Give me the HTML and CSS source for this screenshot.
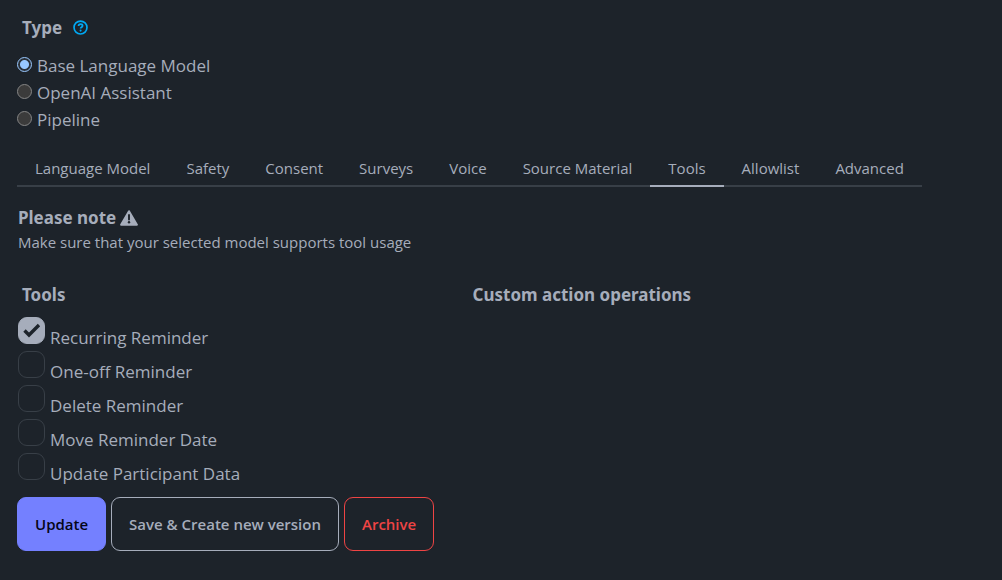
FILE: index.html
```html
<!DOCTYPE html>
<html lang="en">
<head>
<meta charset="utf-8">
<title>Experiment settings</title>
<link rel="stylesheet" href="styles.css">
</head>
<body>
<form class="page">
  <fieldset class="group">
    <legend class="heading type-heading">Type
      <svg class="help" viewBox="0 0 16 16" role="img" aria-label="Help"><circle cx="8" cy="8" r="6.9" fill="none" stroke="currentColor" stroke-width="1.8"/><path d="M5.9 6.4C6 5 6.900 4.500 8.100 4.500c1.200 0 2.100.7 2.100 1.700 0 1.500-2.100 1.500-2.100 2.900" fill="none" stroke="currentColor" stroke-width="1.900"/><circle cx="8.100" cy="11.300" r="1.100" fill="currentColor"/></svg>
    </legend>
    <label class="radio-row"><input class="radio" type="radio" name="type" checked>Base Language Model</label>
    <label class="radio-row"><input class="radio" type="radio" name="type">OpenAI Assistant</label>
    <label class="radio-row"><input class="radio" type="radio" name="type">Pipeline</label>
  </fieldset>

  <div class="tabs" role="tablist">
    <button class="tab" type="button" role="tab">Language Model</button>
    <button class="tab" type="button" role="tab">Safety</button>
    <button class="tab" type="button" role="tab">Consent</button>
    <button class="tab" type="button" role="tab">Surveys</button>
    <button class="tab" type="button" role="tab">Voice</button>
    <button class="tab" type="button" role="tab">Source Material</button>
    <button class="tab tab-active" type="button" role="tab" aria-selected="true">Tools</button>
    <button class="tab" type="button" role="tab">Allowlist</button>
    <button class="tab" type="button" role="tab">Advanced</button>
  </div>

  <section class="note">
    <h2 class="note-title">Please note
      <svg class="warning" viewBox="0 0 18 16" aria-hidden="true"><path d="M9 1.200 16.900 14.700H1.100Z" fill="currentColor" stroke="currentColor" stroke-width="2" stroke-linejoin="round"/><path class="mark" d="M9 5v4.600" stroke-width="1.900" stroke-linecap="round"/><circle class="dot" cx="9" cy="12.300" r="1.200"/></svg>
    </h2>
    <p class="note-text">Make sure that your selected model supports tool usage</p>
  </section>

  <div class="columns">
    <fieldset class="group">
      <legend class="heading">Tools</legend>
      <label class="check-row"><input class="check" type="checkbox" checked><span class="check-label">Recurring Reminder</span></label>
      <label class="check-row"><input class="check" type="checkbox"><span class="check-label">One-off Reminder</span></label>
      <label class="check-row"><input class="check" type="checkbox"><span class="check-label">Delete Reminder</span></label>
      <label class="check-row"><input class="check" type="checkbox"><span class="check-label">Move Reminder Date</span></label>
      <label class="check-row"><input class="check" type="checkbox"><span class="check-label">Update Participant Data</span></label>
    </fieldset>
    <section>
      <h2 class="heading">Custom action operations</h2>
    </section>
  </div>

  <div class="actions">
    <button class="btn btn-primary" type="submit">Update</button>
    <button class="btn" type="button">Save &amp; Create new version</button>
    <button class="btn btn-danger" type="button">Archive</button>
  </div>
</form>
</body>
</html>
```
FILE: styles.css
```css
:root {
  --bg: #1d232a;
  --text: #a6adbb;
  --line: #383f47;
}

* {
  box-sizing: border-box;
}

body {
  margin: 0;
  background: var(--bg);
  color: var(--text);
  font: 17px/27px "Segoe UI", "Open Sans", "Noto Sans", sans-serif;
}

.page {
  padding: 9px 84px 0 17px;
}

.group {
  border: 0;
  margin: 0;
  padding: 0;
  min-width: 0;
}

.heading,
.note-title {
  font-family: "Segoe UI", "Noto Sans", sans-serif;
  font-size: 17px;
  font-weight: 700;
}

.heading {
  margin: 0;
  padding: 9px 5px;
}

.type-heading {
  display: flex;
  align-items: center;
  gap: 11px;
  padding: 5px 5px 11px;
}

.help {
  width: 15px;
  height: 15px;
  color: #00a9f4;
}

.radio-row {
  display: flex;
  align-items: center;
  gap: 5px;
}

.radio {
  appearance: none;
  flex: none;
  width: 15px;
  height: 15px;
  margin: 0 0 3px;
  border: 1px solid #858585;
  border-radius: 50%;
  background: #3b3b3b;
}

.radio:checked {
  border-color: #99c8ff;
  background: radial-gradient(circle, #99c8ff 4px, #2b323a 5px);
}

.tabs {
  display: flex;
  width: fit-content;
  margin-top: 18px;
}

.tab {
  height: 36px;
  padding: 0 18px;
  border: 0;
  border-bottom: 2px solid var(--line);
  background: none;
  color: inherit;
  font: inherit;
  font-size: 15px;
  white-space: nowrap;
}

.tab-active {
  border-color: var(--text);
}

.note {
  margin-top: 17px;
  padding-left: 1px;
}

.note-title {
  display: flex;
  align-items: center;
  gap: 4px;
  margin: 0;
}

.warning {
  width: 18px;
  height: 16px;
}

.mark {
  stroke: var(--bg);
}

.dot {
  fill: var(--bg);
}

.note-text {
  margin: 0;
  font-size: 15px;
  line-height: 23px;
}

.columns {
  display: grid;
  grid-template-columns: 1fr 1fr;
  margin-top: 18px;
}

.check-row {
  display: flex;
  gap: 5px;
  padding-left: 1px;
  height: 34px;
}

.check {
  appearance: none;
  flex: none;
  width: 27px;
  height: 27px;
  margin: 0;
  border: 1px solid var(--line);
  border-radius: 9px;
}

.check:checked {
  border-color: var(--text);
  background: var(--text) url("data:image/svg+xml,%3Csvg xmlns='http://www.w3.org/2000/svg' viewBox='0 0 25 25'%3E%3Cpath d='M5.500 12.500 10 17 20 7' fill='none' stroke='%231d232a' stroke-width='3.400'/%3E%3C/svg%3E");
}

.check-label {
  padding-top: 7px;
}

.actions {
  display: flex;
  flex-wrap: wrap;
  gap: 5px;
  margin-top: 10px;
}

.btn {
  height: 54px;
  padding: 0 17px;
  border: 1px solid var(--text);
  border-radius: 9px;
  background: none;
  color: var(--text);
  font: inherit;
  font-size: 15px;
  font-weight: 600;
}

.btn-primary {
  border-color: #7480ff;
  background: #7480ff;
  color: #050617;
}

.btn-danger {
  border-color: #ef4444;
  color: #ef4444;
}
```
